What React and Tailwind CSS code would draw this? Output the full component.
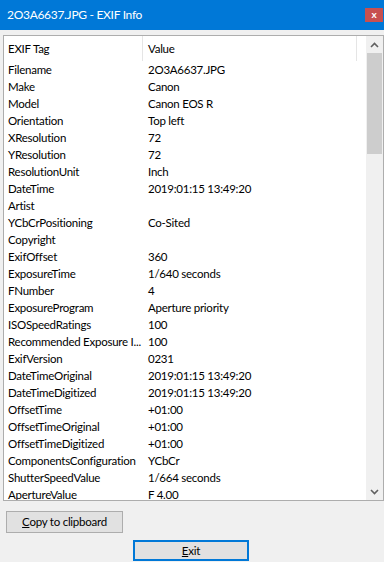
import React from "react";

const rows = [
  ["Filename", "2O3A6637.JPG"],
  ["Make", "Canon"],
  ["Model", "Canon EOS R"],
  ["Orientation", "Top left"],
  ["XResolution", "72"],
  ["YResolution", "72"],
  ["ResolutionUnit", "Inch"],
  ["DateTime", "2019:01:15 13:49:20"],
  ["Artist", ""],
  ["YCbCrPositioning", "Co-Sited"],
  ["Copyright", ""],
  ["ExifOffset", "360"],
  ["ExposureTime", "1/640 seconds"],
  ["FNumber", "4"],
  ["ExposureProgram", "Aperture priority"],
  ["ISOSpeedRatings", "100"],
  ["Recommended Exposure I...", "100"],
  ["ExifVersion", "0231"],
  ["DateTimeOriginal", "2019:01:15 13:49:20"],
  ["DateTimeDigitized", "2019:01:15 13:49:20"],
  ["OffsetTime", "+01:00"],
  ["OffsetTimeOriginal", "+01:00"],
  ["OffsetTimeDigitized", "+01:00"],
  ["ComponentsConfiguration", "YCbCr"],
  ["ShutterSpeedValue", "1/664 seconds"],
  ["ApertureValue", "F 4.00"],
];

export default function App() {
  return (
    <div
      className="w-[384px] h-[562px] bg-[#f0f0f0] flex flex-col overflow-hidden text-[#000] text-[11.5px] tracking-[-0.25px]"
      style={{ fontFamily: "Lato, 'Noto Sans', sans-serif" }}
    >
      <div className="h-[30px] shrink-0 bg-[#0078d7] flex items-center justify-between pl-[7px]">
        <span className="text-white text-[12px] leading-[16px] tracking-[-0.3px]">2O3A6637.JPG - EXIF Info</span>
        <div className="w-[18px] h-[14px] mr-[1px] bg-[#c75050] flex items-center justify-center text-white text-[10px] font-bold leading-none pb-[2px]">
          x
        </div>
      </div>
      <div className="h-[5px] shrink-0" />
      <div className="ml-[3px] w-[381px] h-[466px] shrink-0 border border-[#adadad] bg-white flex overflow-hidden">
        <div className="flex-1 flex flex-col overflow-hidden">
          <div className="h-[25px] shrink-0 flex items-center bg-white">
            <div className="w-[139px] h-full pl-[4px] flex items-center border-r border-[#e5e5e5]">EXIF Tag</div>
            <div className="w-[214px] h-full pl-[5px] flex items-center border-r border-[#e5e5e5]">Value</div>
          </div>
          {rows.map(([k, v], i) => (
            <div key={i} className="h-[17px] shrink-0 flex items-center leading-[16px] whitespace-nowrap">
              <div className="w-[139px] pl-[4px] overflow-hidden">{k}</div>
              <div className="pl-[5px]">{v}</div>
            </div>
          ))}
        </div>
        <div className="w-[17px] shrink-0 bg-[#f0f0f0] flex flex-col">
          <div className="h-[17px] flex items-center justify-center">
            <svg width="9" height="6" viewBox="0 0 9 6">
              <path d="M1 5 L4.5 1.5 L8 5" stroke="#606060" strokeWidth="1.6" fill="none" />
            </svg>
          </div>
          <div className="h-[101px] bg-[#cdcdcd] mx-[1px]" />
          <div className="flex-1" />
          <div className="h-[17px] flex items-center justify-center">
            <svg width="9" height="6" viewBox="0 0 9 6">
              <path d="M1 1 L4.5 4.5 L8 1" stroke="#606060" strokeWidth="1.6" fill="none" />
            </svg>
          </div>
        </div>
      </div>
      <div className="h-[10px] shrink-0" />
      <div className="pl-[6px]">
        <div className="w-[117px] h-[22px] border border-[#adadad] bg-[#e1e1e1] flex items-center justify-center leading-[16px]">
          <span><span className="underline">C</span>opy to clipboard</span>
        </div>
      </div>
      <div className="h-[7px] shrink-0" />
      <div className="pl-[133px]">
        <div className="w-[116px] h-[21px] border-2 border-[#0078d7] bg-[#e1e1e1] flex items-center justify-center leading-[16px]">
          <span><span className="underline">E</span>xit</span>
        </div>
      </div>
    </div>
  );
}
